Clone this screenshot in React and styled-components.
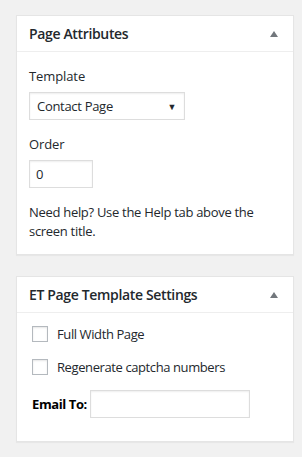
import React from 'react';
import styled, { createGlobalStyle } from 'styled-components';

const GlobalStyle = createGlobalStyle`
    body {
        margin: 0;
        background: #f1f1f1;
        font-family: "Open Sans", "Liberation Sans", sans-serif;
        color: #23282d;
    }
`;

const Page = styled.div`
    width: 302px;
    height: 457px;
    padding: 15px 8px 0 16px;
    box-sizing: border-box;
    display: flex;
    flex-direction: column;
    gap: 21px;
`;

const Box = styled.div`
    background: #fff;
    border: 1px solid #e5e5e5;
    box-shadow: 0 1px 1px rgba(0, 0, 0, 0.04);
`;

const Header = styled.div`
    height: 35px;
    display: flex;
    align-items: center;
    justify-content: space-between;
    padding: 0 12px;
    border-bottom: 1px solid #eee;
`;

const Title = styled.h2`
    margin: 0;
    font-size: 14px;
    font-weight: 600;
    letter-spacing: -0.35px;
`;

const Toggle = styled.span`
    width: 0;
    height: 0;
    border-left: 4px solid transparent;
    border-right: 4px solid transparent;
    border-bottom: 6px solid #72777c;
    margin-right: 3px;
`;

const Inside = styled.div`
    padding: ${p => p.$pad || '12px 12px'};
    font-size: 13px;
`;

const Label = styled.p`
    margin: 0 0 7px;
    font-size: 13px;
    font-weight: 400;
    letter-spacing: -0.1px;
`;

const Select = styled.div`
    width: 156px;
    height: 28px;
    box-sizing: border-box;
    border: 1px solid #ddd;
    box-shadow: inset 0 1px 2px rgba(0, 0, 0, 0.07);
    display: flex;
    align-items: center;
    justify-content: space-between;
    padding: 0 8px 0 7px;
    margin-bottom: 15px;
    font-size: 13px;
    letter-spacing: -0.3px;
`;

const Caret = styled.span`
    font-size: 9px;
`;

const Field = styled.div`
    width: ${p => p.$w}px;
    height: 28px;
    box-sizing: border-box;
    border: 1px solid #ddd;
    box-shadow: inset 0 1px 2px rgba(0, 0, 0, 0.07);
    display: flex;
    align-items: center;
    padding: 0 6px;
    font-size: 13px;
`;

const Help = styled.p`
    margin: 15px 0 0;
    line-height: 19px;
    font-size: 13px;
    letter-spacing: -0.3px;
`;

const CheckRow = styled.label`
    display: flex;
    align-items: center;
    gap: 9px;
    margin: 0 0 17px 3px;
    height: 16px;
    font-size: 13px;
    letter-spacing: -0.4px;
`;

const Check = styled.span`
    width: 16px;
    height: 16px;
    box-sizing: border-box;
    border: 1px solid #b4b9be;
    box-shadow: inset 0 1px 2px rgba(0, 0, 0, 0.1);
`;

const EmailRow = styled.div`
    display: flex;
    align-items: center;
    gap: 3px;
    margin: -2px 0 0 3px;
`;

const EmailLabel = styled.strong`
    font-size: 13px;
    font-weight: 700;
    color: #000;
    letter-spacing: -0.4px;
`;

export default function App() {
    return (
        <>
            <GlobalStyle />
            <Page>
                <Box>
                    <Header>
                        <Title>Page Attributes</Title>
                        <Toggle />
                    </Header>
                    <Inside $pad="15px 12px 13px">
                        <Label>Template</Label>
                        <Select>
                            Contact Page
                            <Caret>▼</Caret>
                        </Select>
                        <Label>Order</Label>
                        <Field $w={64}>0</Field>
                        <Help>Need help? Use the Help tab above the screen title.</Help>
                    </Inside>
                </Box>
                <Box>
                    <Header>
                        <Title>ET Page Template Settings</Title>
                        <Toggle />
                    </Header>
                    <Inside $pad="13px 12px 23px">
                        <CheckRow><Check />Full Width Page</CheckRow>
                        <CheckRow><Check />Regenerate captcha numbers</CheckRow>
                        <EmailRow>
                            <EmailLabel>Email To:</EmailLabel>
                            <Field $w={160} />
                        </EmailRow>
                    </Inside>
                </Box>
            </Page>
        </>
    );
}
